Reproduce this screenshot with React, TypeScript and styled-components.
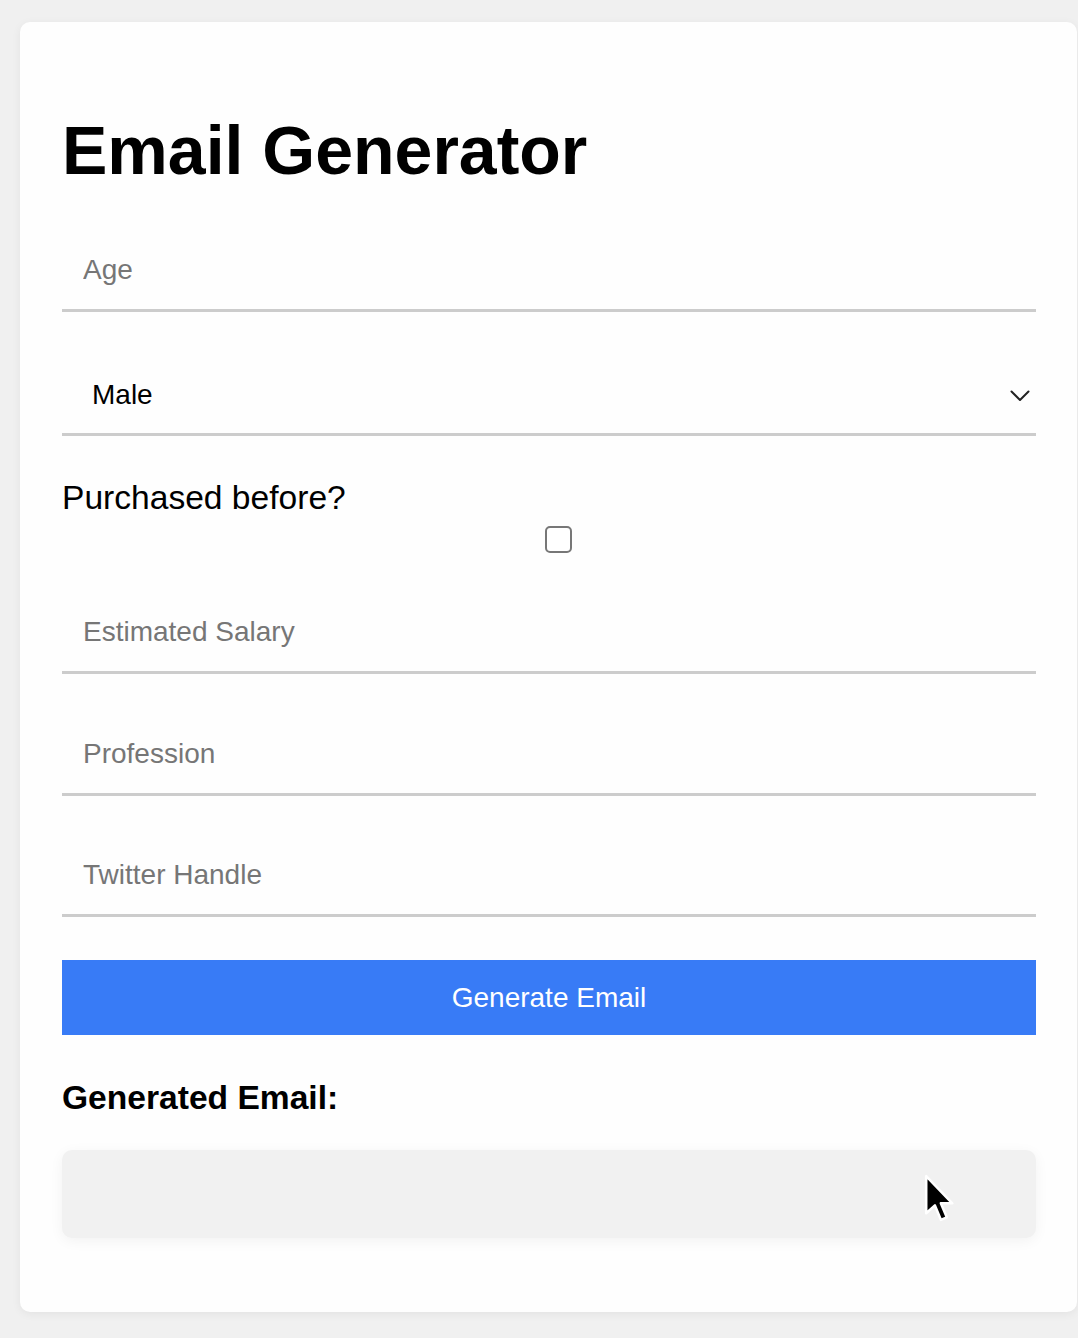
import React from 'react';
import styled, { createGlobalStyle } from 'styled-components';

const GlobalStyle = createGlobalStyle`
  html, body { margin: 0; padding: 0; background: #f0f0f0; }
  body { font-family: "Liberation Sans", Arial, Helvetica, sans-serif; color: #000; }
  * { box-sizing: border-box; }
`;

const Page = styled.div`
  padding: 22px 1px 26px 20px;
`;

const Card = styled.div`
  width: 1057px;
  background: #fefefe;
  border-radius: 10px;
  box-shadow: 0 2px 10px rgba(0, 0, 0, 0.06);
  padding: 90px 41px 74px 42px;
`;

const Title = styled.h1`
  margin: 0;
  font-size: 68px;
  line-height: 76px;
  font-weight: 700;
  color: #000;
`;

const Form = styled.form`
  display: flex;
  flex-direction: column;
  margin: 0;
`;

const TextInput = styled.input<{ $mt: number }>`
  display: block;
  width: 100%;
  height: 81px;
  margin: ${(p) => p.$mt}px 0 0;
  padding: 0 21px;
  border: none;
  border-bottom: 3px solid #cccccc;
  background: transparent;
  font-family: inherit;
  font-size: 28px;
  color: #000;
  outline: none;
  &::placeholder { color: #767676; }
`;

const SelectWrap = styled.div`
  position: relative;
  margin-top: 43px;
`;

const Select = styled.select`
  display: block;
  width: 100%;
  height: 81px;
  margin: 0;
  padding: 0 60px 0 30px;
  appearance: none;
  -webkit-appearance: none;
  border: none;
  border-bottom: 3px solid #cccccc;
  border-radius: 0;
  background: transparent;
  font-family: inherit;
  font-size: 28px;
  color: #000;
  outline: none;
`;

const Chevron = styled.svg`
  position: absolute;
  right: 6px;
  top: 35px;
  pointer-events: none;
`;

const Label = styled.label`
  display: block;
  margin-top: 43px;
  font-size: 33.6px;
  line-height: 38px;
  color: #000;
`;

const CheckRow = styled.div`
  display: flex;
  justify-content: center;
  padding-left: 18px;
  margin-top: 9px;
`;

const Checkbox = styled.input`
  appearance: none;
  -webkit-appearance: none;
  width: 27px;
  height: 27px;
  margin: 0;
  border: 2px solid #777;
  border-radius: 5px;
  background: #fff;
`;

const Button = styled.button`
  display: block;
  width: 100%;
  height: 75px;
  margin-top: 43px;
  border: none;
  border-radius: 0;
  background: #387bf6;
  color: #fff;
  font-family: inherit;
  font-size: 28px;
  cursor: pointer;
`;

const ResultTitle = styled.h3`
  margin: 44px 0 0;
  font-size: 33.6px;
  line-height: 38px;
  font-weight: 700;
  color: #000;
`;

const Output = styled.div`
  position: relative;
  margin-top: 33px;
  height: 88px;
  background: #f1f1f1;
  border-radius: 10px;
  box-shadow: 0 3px 14px rgba(0, 0, 0, 0.05);
`;

const Pointer = styled.svg`
  position: absolute;
  left: 861px;
  top: 24px;
`;

export default function App() {
  return (
    <>
      <GlobalStyle />
      <Page>
        <Card>
          <Title>Email Generator</Title>
          <Form onSubmit={(e) => e.preventDefault()}>
            <TextInput $mt={43} placeholder="Age" />
            <SelectWrap>
              <Select defaultValue="Male">
                <option>Male</option>
                <option>Female</option>
              </Select>
              <Chevron width="20" height="12" viewBox="0 0 20 12" fill="none">
                <path d="M1.5 1.5 L10 10 L18.5 1.5" stroke="#222" strokeWidth="2" strokeLinecap="round" strokeLinejoin="round" />
              </Chevron>
            </SelectWrap>
            <Label>Purchased before?</Label>
            <CheckRow>
              <Checkbox type="checkbox" />
            </CheckRow>
            <TextInput $mt={40} placeholder="Estimated Salary" />
            <TextInput $mt={41} placeholder="Profession" />
            <TextInput $mt={40} placeholder="Twitter Handle" />
            <Button type="submit">Generate Email</Button>
          </Form>
          <ResultTitle>Generated Email:</ResultTitle>
          <Output>
            <Pointer width="34" height="52" viewBox="0 0 16 24.5">
              <path d="M1.5 1 L1.5 18.5 L5.6 14.8 L8.4 21.6 L11.2 20.4 L8.4 13.8 L13.8 13.8 Z" fill="#000" stroke="#fff" strokeWidth="1.2" strokeLinejoin="round" />
            </Pointer>
          </Output>
        </Card>
      </Page>
    </>
  );
}
